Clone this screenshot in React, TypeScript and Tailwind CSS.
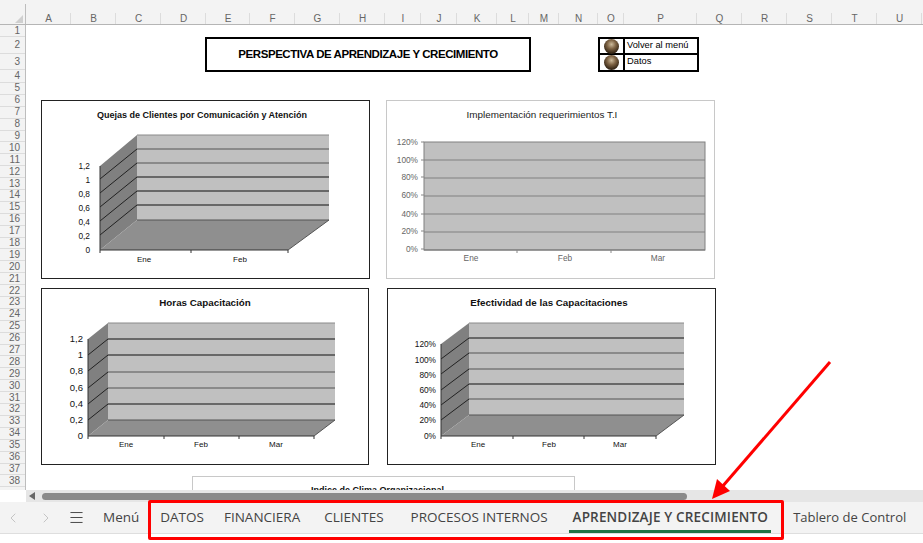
import React from "react";
import { ChevronLeft, ChevronRight, Menu } from "lucide-react";

const columns = [
  { label: "A", width: "w-[45px]" },
  { label: "B", width: "w-[45px]" },
  { label: "C", width: "w-[45px]" },
  { label: "D", width: "w-[45px]" },
  { label: "E", width: "w-[44px]" },
  { label: "F", width: "w-[45px]" },
  { label: "G", width: "w-[45px]" },
  { label: "H", width: "w-[45px]" },
  { label: "I", width: "w-[36px]" },
  { label: "J", width: "w-[36px]" },
  { label: "K", width: "w-[40px]" },
  { label: "L", width: "w-[32px]" },
  { label: "M", width: "w-[30px]" },
  { label: "N", width: "w-[39px]" },
  { label: "O", width: "w-[26px]" },
  { label: "P", width: "w-[73px]" },
  { label: "Q", width: "w-[45px]" },
  { label: "R", width: "w-[45px]" },
  { label: "S", width: "w-[45px]" },
  { label: "T", width: "w-[45px]" },
  { label: "U", width: "w-[45px]" },
];

const rows = Array.from({ length: 38 }, (_, i) => i + 1);

const rowHeight = (n: number) => {
  if (n === 1) return "h-[12px]";
  if (n === 2) return "h-[17px]";
  if (n === 3) return "h-[16px]";
  if (n === 4) return "h-[13px]";
  return "h-[11.9px]";
};

const tabs = [
  { label: "DATOS", margin: "ml-[21px]" },
  { label: "FINANCIERA", margin: "ml-[20px]" },
  { label: "CLIENTES", margin: "ml-[24px]" },
  { label: "PROCESOS INTERNOS", margin: "ml-[27px]" },
];

interface Box {
  x: number;
  y: number;
  w: number;
  h: number;
}

interface Chart3DProps {
  box: Box;
  title: string;
  titleX: number;
  titleY: number;
  titleSize: number;
  wall: { x1: number; x2: number; top: number; bottom: number };
  lines: { y: number; dark: boolean }[];
  left: { x: number; top: number; bottom: number };
  frontRight: number;
  yLabels: { text: string; y: number }[];
  yGap: number;
  ySize: number;
  xLabels: { text: string; x: number }[];
  ticks: number[];
  labelY: number;
}

function Chart3D({ box, title, titleX, titleY, titleSize, wall, lines, left, frontRight, yLabels, yGap, ySize, xLabels, ticks, labelY }: Chart3DProps) {
  const depth = left.bottom - wall.bottom;
  return (
    <svg
      className="block w-full h-full"
      viewBox={`${box.x + 1} ${box.y + 1} ${box.w - 2} ${box.h - 2}`}
    >
      <text x={titleX} y={titleY} textAnchor="middle" fontSize={titleSize} fontWeight="700" fill="#111">
        {title}
      </text>
      <rect x={wall.x1} y={wall.top} width={wall.x2 - wall.x1} height={wall.bottom - wall.top} fill="#c0c0c0" />
      <polygon
        points={`${left.x},${left.top} ${wall.x1},${wall.top} ${wall.x1},${wall.bottom} ${left.x},${left.bottom}`}
        fill="#808080"
      />
      <polygon
        points={`${left.x},${left.bottom} ${wall.x1},${wall.bottom} ${wall.x2},${wall.bottom} ${frontRight},${left.bottom}`}
        fill="#8f8f8f"
      />
      <line x1={wall.x1} y1={wall.top} x2={wall.x2} y2={wall.top} stroke="#8a8a8a" />
      <line x1={wall.x1} y1={wall.bottom} x2={wall.x2} y2={wall.bottom} stroke="#555" />
      {lines.map((l) => (
        <g key={l.y}>
          <line x1={wall.x1} y1={l.y} x2={wall.x2} y2={l.y} stroke={l.dark ? "#111" : "#555"} />
          <line
            x1={wall.x1}
            y1={l.y}
            x2={left.x}
            y2={l.y + depth}
            stroke="#222"
          />
        </g>
      ))}
      <line x1={left.x} y1={left.top} x2={left.x} y2={left.bottom + 3} stroke="#333" />
      <line x1={left.x} y1={left.bottom} x2={frontRight} y2={left.bottom} stroke="#333" />
      <line x1={frontRight} y1={left.bottom} x2={wall.x2} y2={wall.bottom} stroke="#555" />
      {ticks.map((t) => (
        <line key={t} x1={t} y1={left.bottom} x2={t} y2={left.bottom + 3} stroke="#333" />
      ))}
      {yLabels.map((l) => (
        <text key={l.text} x={left.x - yGap} y={l.y + 3} textAnchor="end" fontSize={ySize} fill="#111">
          {l.text}
        </text>
      ))}
      {xLabels.map((l) => (
        <text key={l.text} x={l.x} y={labelY + 3} textAnchor="middle" fontSize="8" fill="#111">
          {l.text}
        </text>
      ))}
    </svg>
  );
}

function FlatChart() {
  const box = { x: 386, y: 100, w: 329, h: 179 };
  const grid = [160, 178, 196, 214, 232];
  const labels = [
    { text: "120%", y: 142 },
    { text: "100%", y: 160 },
    { text: "80%", y: 177 },
    { text: "60%", y: 195 },
    { text: "40%", y: 214 },
    { text: "20%", y: 231 },
    { text: "0%", y: 249 },
  ];
  return (
    <svg
      className="block w-full h-full"
      viewBox={`${box.x + 1} ${box.y + 1} ${box.w - 2} ${box.h - 2}`}
    >
      <text x="542" y="118" textAnchor="middle" fontSize="9.9" fill="#222">
        Implementación requerimientos T.I
      </text>
      <rect x="424" y="142" width="281" height="108" fill="#c0c0c0" stroke="#808080" />
      {grid.map((y) => (
        <line key={y} x1="424" y1={y} x2="705" y2={y} stroke="#808080" />
      ))}
      {labels.map((l) => (
        <g key={l.text}>
          <line x1="421" y1={l.y} x2="424" y2={l.y} stroke="#888" />
          <text x="418" y={l.y + 3} textAnchor="end" fontSize="8.3" fill="#666">
            {l.text}
          </text>
        </g>
      ))}
      <line x1="424" y1="250" x2="705" y2="250" stroke="#777" />
      {[517, 611].map((t) => (
        <line key={t} x1={t} y1="250" x2={t} y2="253" stroke="#888" />
      ))}
      <text x="471" y="261" textAnchor="middle" fontSize="8.3" fill="#666">Ene</text>
      <text x="565" y="261" textAnchor="middle" fontSize="8.3" fill="#666">Feb</text>
      <text x="658" y="261" textAnchor="middle" fontSize="8.3" fill="#666">Mar</text>
    </svg>
  );
}

function Marble() {
  return (
    <span className="block w-[15px] h-[15px] rounded-full bg-[radial-gradient(circle_at_50%_36%,#cdbb9b_0%,#7e6344_36%,#3d2d1b_68%,#15100a_100%)]" />
  );
}

export default function App() {
  return (
    <div className="relative w-[923px] h-[543px] overflow-hidden bg-white flex flex-col [font-family:'Liberation_Sans',Arial,sans-serif]">
      {/* top strip */}
      <div className="h-[13px] shrink-0 bg-[#f3f3f3] pl-[25px]">
        <div className="mt-[4px] h-[9px] w-px bg-[#bdbdbd]" />
      </div>

      {/* column headers */}
      <div className="h-[12px] shrink-0 flex bg-[#f3f3f3] border-b border-[#b5b5b5]">
        <div className="w-[26px] shrink-0 flex items-end justify-end pr-[2px] pb-px border-r border-[#bdbdbd]">
          <div className="w-0 h-0 border-l-[8px] border-l-transparent border-b-[8px] border-b-[#cfcfcf]" />
        </div>
        {columns.map((c) => (
          <div
            key={c.label}
            className={`${c.width} shrink-0 flex items-center justify-center pl-px border-r border-[#dcdcdc] text-[10px] leading-none text-[#666]`}
          >
            {c.label}
          </div>
        ))}
      </div>

      <div className="h-[465px] shrink-0 flex overflow-hidden">
        {/* row headers */}
        <div className="w-[26px] shrink-0 flex flex-col bg-[#f3f3f3] border-r border-[#bdbdbd]">
          {rows.map((n) => (
            <div
              key={n}
              className={`${rowHeight(n)} shrink-0 flex items-center justify-end pr-[5px] border-b border-[#dcdcdc] text-[10px] leading-none text-[#666]`}
            >
              {n}
            </div>
          ))}
        </div>

        {/* sheet */}
        <div className="flex-1 overflow-hidden pt-[12px] pl-[15px]">
          <div className="flex">
            <div className="ml-[164px] w-[326px] h-[35px] border-2 border-black flex items-center justify-center text-[11.5px] tracking-[-0.44px] font-bold text-black">
              PERSPECTIVA DE APRENDIZAJE Y CRECIMIENTO
            </div>
            <div className="ml-[67px] w-[101px] h-[35px] border-2 border-black flex flex-col text-[9.3px] leading-none text-black">
              <div className="h-[16px] flex border-b-2 border-black">
                <div className="w-[25px] flex items-center justify-center pr-px border-r-2 border-black">
                  <Marble />
                </div>
                <span className="pl-[2px] pt-[2px]">Volver al menú</span>
              </div>
              <div className="flex-1 flex">
                <div className="w-[25px] flex items-center justify-center pr-px border-r-2 border-black">
                  <Marble />
                </div>
                <span className="pl-[2px] pt-[2px]">Datos</span>
              </div>
            </div>
          </div>

          <div className="flex mt-[28px]">
            <div className="w-[329px] h-[179px] border border-[#222]">
              <Chart3D
                box={{ x: 41, y: 100, w: 329, h: 179 }}
                title="Quejas de Clientes por Comunicación y Atención"
                titleX={202}
                titleY={118}
                titleSize={9}
                wall={{ x1: 137, x2: 329, top: 135, bottom: 220 }}
                lines={[
                  { y: 149, dark: false },
                  { y: 163, dark: false },
                  { y: 177, dark: true },
                  { y: 191, dark: true },
                  { y: 205, dark: true },
                ]}
                left={{ x: 100, top: 166, bottom: 250 }}
                frontRight={288}
                yLabels={[
                  { text: "1,2", y: 166 },
                  { text: "1", y: 180 },
                  { text: "0,8", y: 194 },
                  { text: "0,6", y: 208 },
                  { text: "0,4", y: 222 },
                  { text: "0,2", y: 236 },
                  { text: "0", y: 250 },
                ]}
                yGap={10}
                ySize={8.3}
                xLabels={[
                  { text: "Ene", x: 144 },
                  { text: "Feb", x: 240 },
                ]}
                ticks={[191, 288]}
                labelY={259}
              />
            </div>
            <div className="ml-[16px] w-[329px] h-[179px] border border-[#c8c8c8]">
              <FlatChart />
            </div>
          </div>

          <div className="flex mt-[9px]">
            <div className="w-[328px] h-[177px] border border-[#222]">
              <Chart3D
                box={{ x: 41, y: 288, w: 328, h: 177 }}
                title="Horas Capacitación"
                titleX={205}
                titleY={306}
                titleSize={9.8}
                wall={{ x1: 108, x2: 335, top: 323, bottom: 420 }}
                lines={[
                  { y: 339, dark: true },
                  { y: 355, dark: true },
                  { y: 372, dark: false },
                  { y: 388, dark: false },
                  { y: 404, dark: true },
                ]}
                left={{ x: 88, top: 339, bottom: 436 }}
                frontRight={314}
                yLabels={[
                  { text: "1,2", y: 339 },
                  { text: "1", y: 355 },
                  { text: "0,8", y: 371 },
                  { text: "0,6", y: 388 },
                  { text: "0,4", y: 404 },
                  { text: "0,2", y: 420 },
                  { text: "0", y: 436 },
                ]}
                yGap={5}
                ySize={9.5}
                xLabels={[
                  { text: "Ene", x: 126 },
                  { text: "Feb", x: 201 },
                  { text: "Mar", x: 276 },
                ]}
                ticks={[164, 239, 314]}
                labelY={444}
              />
            </div>
            <div className="ml-[18px] w-[329px] h-[177px] border border-[#222]">
              <Chart3D
                box={{ x: 387, y: 288, w: 329, h: 177 }}
                title="Efectividad de las Capacitaciones"
                titleX={549}
                titleY={306}
                titleSize={9.8}
                wall={{ x1: 469, x2: 684, top: 323, bottom: 415 }}
                lines={[
                  { y: 338, dark: true },
                  { y: 353, dark: false },
                  { y: 369, dark: false },
                  { y: 384, dark: true },
                  { y: 399, dark: false },
                ]}
                left={{ x: 441, top: 344, bottom: 436 }}
                frontRight={656}
                yLabels={[
                  { text: "120%", y: 344 },
                  { text: "100%", y: 360 },
                  { text: "80%", y: 375 },
                  { text: "60%", y: 390 },
                  { text: "40%", y: 405 },
                  { text: "20%", y: 420 },
                  { text: "0%", y: 436 },
                ]}
                yGap={5}
                ySize={8.3}
                xLabels={[
                  { text: "Ene", x: 478 },
                  { text: "Feb", x: 549 },
                  { text: "Mar", x: 620 },
                ]}
                ticks={[513, 584, 656]}
                labelY={444}
              />
            </div>
          </div>

          <div className="mt-[11px] ml-[151px] w-[383px] h-[60px] border border-[#c8c8c8] pt-[7px] pr-[12px] text-center text-[9px] font-bold text-[#111]">
            Indice de Clima Organizacional
          </div>
        </div>
      </div>

      {/* horizontal scrollbar */}
      <div className="h-[12px] shrink-0 flex items-center ml-[26px] bg-[#e6e6e6]">
        <div className="ml-[3px] w-0 h-0 border-y-[4px] border-y-transparent border-r-[6px] border-r-[#666]" />
        <div className="ml-[7px] w-[645px] h-[7px] rounded-full bg-[#8a8a8a]" />
      </div>

      {/* sheet tabs */}
      <div className="h-[32px] shrink-0 flex items-center whitespace-nowrap bg-[#f3f3f3] border-b border-[#dedede] text-[13.5px] text-[#444] [font-family:'Open_Sans',sans-serif]">
        <ChevronLeft className="ml-[5px] w-[16px] h-[16px] text-[#c4c4c4]" strokeWidth={1.5} />
        <ChevronRight className="ml-[17px] w-[16px] h-[16px] text-[#c4c4c4]" strokeWidth={1.5} />
        <Menu className="ml-[14px] w-[17px] h-[17px] text-[#333]" strokeWidth={1.25} />
        <span className="ml-[18px]">Menú</span>
        {tabs.map((t) => (
          <span key={t.label} className={t.margin}>
            {t.label}
          </span>
        ))}
        <span className="relative ml-[25px] font-semibold tracking-[0.16px]">
          APRENDIZAJE Y CRECIMIENTO
          <span className="absolute left-[-4px] right-[-3px] top-[23px] h-[3px] bg-[#217346]" />
        </span>
        <span className="ml-[25px] text-[13px]">Tablero de Control</span>
      </div>

      {/* annotation over the screenshot */}
      <div className="absolute left-[148px] top-[500px] w-[636px] h-[40px] border-[3px] border-[#ff0000] rounded-[2px]" />
      <svg className="absolute inset-0 w-full h-full pointer-events-none" viewBox="0 0 923 543">
        <line x1="830" y1="362" x2="722" y2="487" stroke="#ff0000" strokeWidth="3" />
        <polygon points="712,499 717,479 730,491" fill="#ff0000" />
      </svg>
    </div>
  );
}
